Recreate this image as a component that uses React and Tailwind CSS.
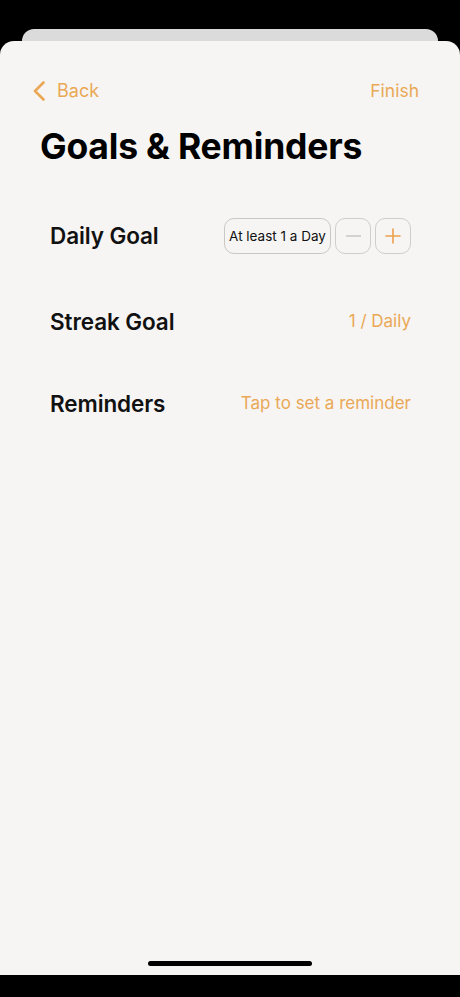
import React from 'react';

const orange = 'text-[#eaa856]';

const Row = ({ label, children, className = '' }) => (
  <div className={`flex items-center justify-between pl-[50px] pr-[49px] ${className}`}>
    <span className="text-[22.5px] font-semibold tracking-[-0.1px] text-[#111]">{label}</span>
    {children}
  </div>
);

export default function App() {
  return (
    <div
      className="flex h-[997px] w-[460px] flex-col overflow-hidden bg-black"
      style={{ fontFamily: 'Inter, "Noto Sans", sans-serif' }}
    >
      {/* sheet stacked behind */}
      <div className="mx-[22px] mt-[29px] h-[12px] shrink-0 rounded-t-[12px] bg-[#dcdbdb]" />

      {/* main sheet */}
      <div className="flex h-[934px] shrink-0 flex-col rounded-t-[14px] bg-[#f6f5f3]">
        <div className="flex items-center justify-between pl-[32px] pr-[41px] pt-[38px]">
          <button className={`flex items-center gap-[11px] ${orange}`}>
            <svg width="14" height="20" viewBox="0 0 14 20" fill="none">
              <path d="M11.5 1.5 L3 10 L11.5 18.5" stroke="currentColor" strokeWidth="2.6" strokeLinecap="round" strokeLinejoin="round" />
            </svg>
            <span className="text-[18px] leading-[24px]">Back</span>
          </button>
          <span className={`text-[17.5px] leading-[24px] ${orange}`}>Finish</span>
        </div>

        <h1 className="mt-[22px] pl-[40px] text-[35.5px] font-bold leading-[44px] tracking-[-0.2px] text-black">
          Goals &amp; Reminders
        </h1>

        <Row label="Daily Goal" className="mt-[49px] h-[36px]">
          <div className="flex items-center gap-[4px]">
            <div className="flex h-[36px] w-[107px] items-center justify-center rounded-[10px] border border-[#c9c8c6] text-[13.5px] text-[#111]">
              At least 1 a Day
            </div>
            <div className="flex h-[36px] w-[36px] items-center justify-center rounded-[10px] border border-[#cfcecc]">
              <span className="block h-[1.5px] w-[15px] bg-[#d3d2d0]" />
            </div>
            <div className="flex h-[36px] w-[36px] items-center justify-center rounded-[10px] border border-[#cfcecc]">
              <svg width="16" height="16" viewBox="0 0 16 16">
                <path d="M8 1v14M1 8h14" stroke="#eaa14c" strokeWidth="1.6" strokeLinecap="round" />
              </svg>
            </div>
          </div>
        </Row>

        <Row label="Streak Goal" className="mt-[50px] h-[36px]">
          <span className={`text-[17px] ${orange}`}>1 / Daily</span>
        </Row>

        <Row label="Reminders" className="mt-[46px] h-[36px]">
          <span className={`text-[17px] ${orange}`}>Tap to set a reminder</span>
        </Row>

        <div className="mt-auto mb-[9px] flex justify-center">
          <div className="h-[5px] w-[164px] rounded-full bg-black" />
        </div>
      </div>
    </div>
  );
}
